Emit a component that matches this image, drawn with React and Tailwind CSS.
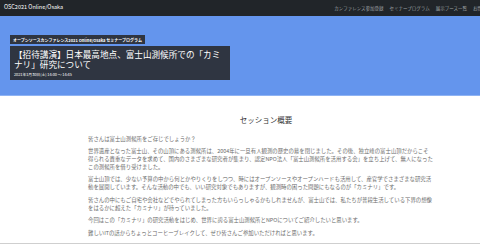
import React from 'react';

const paragraphs = [
  '皆さんは富士山測候所をご存じでしょうか？',
  '世界遺産となった富士山、その山頂にある測候所は、2004年に一旦有人観測の歴史の幕を閉じました。その後、独立峰の富士山頂だからこそ得られる貴重なデータを求めて、国内のさまざまな研究者が集まり、認定NPO法人「富士山測候所を活用する会」を立ち上げて、無人になったこの測候所を借り受けました。',
  '富士山頂では、少ない予算の中から何とかやりくりをしつつ、時にはオープンソースやオープンハードも活用して、産官学でさまざまな研究活動を展開しています。そんな活動の中でも、いい研究対象でもありますが、観測時の困った問題にもなるのが「カミナリ」です。',
  '皆さんの中にもご自宅や会社などでやられてしまった方もいらっしゃるかもしれませんが、富士山では、私たちが普段生活している下界の想像をはるかに超えた「カミナリ」が待っていました。',
  '今回はこの「カミナリ」の研究活動をはじめ、世界に誇る富士山測候所とNPOについてご紹介したいと思います。',
  '難しいITの話からちょっとコーヒーブレイクして、ぜひ皆さんご参加いただければと思います。',
];

export default function App() {
  return (
    <div className="w-[480px] h-[250px] overflow-hidden bg-white font-['Noto_Sans_CJK_JP',sans-serif]">
      {/* Navbar */}
      <nav className="h-[16px] bg-[#212529] flex items-center justify-between pl-[4px] whitespace-nowrap overflow-hidden">
        <span className="text-[5.5px] text-white leading-none">OSC2021 Online/Osaka</span>
        <div className="flex gap-[6px] text-[4.5px] text-[#9fa2a5] leading-none -mr-[20px]">
          <span>カンファレンス参加登録</span>
          <span>セミナープログラム</span>
          <span>展示ブース一覧</span>
          <span>お問い合わせ</span>
        </div>
      </nav>

      {/* Hero */}
      <section className="h-[80px] bg-[#6495ed] border-b border-[#8fb3f3] pt-[19px] pl-[10px]">
        <div className="w-fit bg-[#2f3541] text-white text-[4px] leading-none px-[3px] py-[2.5px] font-bold">
          オープンソースカンファレンス2021 Online/Osaka セミナープログラム
        </div>
        <div className="mt-[1.5px] w-[220px] bg-[#2f3541] text-white px-[4px] pt-[3px] pb-[4px]">
          <h1 className="text-[8.6px] leading-[10px]">
            【招待講演】日本最高地点、富士山測候所での「カミナリ」研究について
          </h1>
          <p className="text-[3.8px] leading-none mt-[4px]">2021年1月30日(土) 14:00 〜 14:45</p>
        </div>
      </section>

      {/* Body */}
      <main className="ml-[88px] w-[346px] pt-[20px]">
        <h2 className="text-center text-[7.5px] leading-none text-[#333] ml-[10px] mb-[12px]">セッション概要</h2>
        <div className="text-[5.4px] leading-[7.6px] text-[#6b6b6b]">
          {paragraphs.map((p, i) => (
            <p key={i} className="mb-[5.3px]">
              {p}
            </p>
          ))}
        </div>
      </main>
      <div className="mt-[3px] border-t border-[#cfcfcf]" />
    </div>
  );
}
